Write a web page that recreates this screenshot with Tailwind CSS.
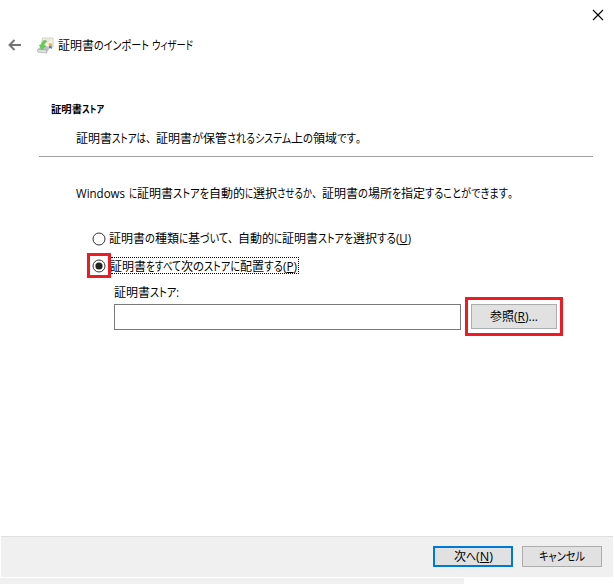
<!DOCTYPE html>
<html lang="ja">
<head>
<meta charset="utf-8">
<title>証明書のインポート ウィザード</title>
<script src="https://cdn.jsdelivr.net/npm/@tailwindcss/browser@4"></script>
</head>
<body class="bg-white">
<main class="flex h-[584px] w-[614px] flex-col overflow-hidden bg-white font-['Open_Sans','Noto_Sans_CJK_JP',sans-serif] text-[12px] leading-[18px] text-black">
  <div class="flex h-[30px] shrink-0 justify-end pt-[9px] pr-[10px]">
    <svg class="h-3 w-3" viewBox="0 0 12 12" fill="none" stroke="#000" stroke-width="1.1"><path d="M1 1l10 10M11 1L1 11"/></svg>
  </div>
  <header class="flex h-[30px] shrink-0 items-center pl-[8px]">
    <svg class="h-[12px] w-[14px]" viewBox="0 0 14 12" fill="none" stroke="#737373" stroke-width="1.9"><path d="M13 6H1.5M6.5 1L1.5 6l5 5"/></svg>
    <svg class="ml-[15px] h-[17px] w-[17px]" viewBox="0 0 17 17">
      <path d="M5.5 1h10.5v9H4.5z" fill="#f7f3e8" stroke="#c9c3b5" stroke-width=".8"/>
      <path d="M9 3h5M9 5h3" stroke="#ddd8ca"/>
      <path d="M12.4 8l-.8 4 1.7-1 1.7 1-.6-4z" fill="#5277be"/>
      <circle cx="13.3" cy="7.6" r="1.7" fill="#efb532"/>
      <path d="M.7 12l3-2.5h7.8l1 2-2.5 3.5-9-.5z" fill="#bec4c5"/>
      <path d="M.7 12.3l9 .7v3l-9-1z" fill="#e1e4e4" stroke="#969c9d" stroke-width=".6"/>
      <path d="M8.5 3c-2.5.4-3.6 2.2-4 4.7L2.4 8l2.2 4.6L9 9l-2-.5c.3-2 1.1-3 2.6-3.8z" fill="#5fd04f" stroke="#4db84e" stroke-width=".5"/>
    </svg>
    <div class="ml-1 flex translate-y-px"><span data-w="36">証明書</span><span data-w="55">のインポート</span><span data-w="3"></span><span data-w="41">ウィザード</span></div>
  </header>

  <section class="flex h-[97px] shrink-0 flex-col pl-[51px] pt-[40px]">
    <div class="flex text-[10px] font-bold"><span data-w="31">証明書</span><span data-w="22">ストア</span></div>
    <div class="mt-[12px] ml-[25px] flex"><span data-w="36">証明書</span><span data-w="34">ストアは</span><span data-w="10">、</span><span data-w="36">証明書</span><span data-w="11">が</span><span data-w="24">保管</span><span data-w="28">される</span><span data-w="36">システム</span><span data-w="12">上</span><span data-w="10">の</span><span data-w="24">領域</span><span data-w="19">です</span><span data-w="10">。</span></div>
  </section>
  <div class="mr-[21px] ml-[39px] h-px shrink-0 translate-y-[-1px] bg-[#a0a0a0]"></div>

  <section class="flex grow flex-col">
    <div class="mt-[27px] ml-[76px] flex"><span data-w="49">Windows</span><span data-w="4"></span><span data-w="8">に</span><span data-w="36">証明書</span><span data-w="36">ストアを</span><span data-w="36">自動的</span><span data-w="8">に</span><span data-w="24">選択</span><span data-w="35">させるか</span><span data-w="10">、</span><span data-w="36">証明書</span><span data-w="10">の</span><span data-w="24">場所</span><span data-w="9">を</span><span data-w="24">指定</span><span data-w="83">することができます</span><span data-w="10">。</span></div>
    <div class="mt-[27px] ml-[92px] flex items-center">
      <svg class="h-[14px] w-[14px]" viewBox="0 0 14 14"><circle cx="7" cy="7" r="6" fill="#fff" stroke="#333"/></svg>
      <div class="ml-[3px] flex"><span data-w="36">証明書</span><span data-w="10">の</span><span data-w="24">種類</span><span data-w="9">に</span><span data-w="12">基</span><span data-w="28">づいて</span><span data-w="10">、</span><span data-w="36">自動的</span><span data-w="8">に</span><span data-w="36">証明書</span><span data-w="35">ストアを</span><span data-w="24">選択</span><span data-w="19">する</span><span data-w="15">(<u>U</u>)</span></div>
    </div>
    <div class="mt-[5px] ml-[87px] flex items-center">
      <div class="flex h-[25px] w-[24px] items-center justify-center border-3 border-[#ed1c24]">
        <svg class="h-[14px] w-[14px]" viewBox="0 0 14 14"><circle cx="7" cy="7" r="6" fill="#fff" stroke="#333"/><circle cx="7" cy="7" r="3.6" fill="#222"/></svg>
      </div>
      <div class="flex h-[17px] w-[188px] items-center border border-l-0 border-dotted border-black"><div class="-ml-[1px] flex translate-y-px"><span data-w="36">証明書</span><span data-w="35">をすべて</span><span data-w="12">次</span><span data-w="11">の</span><span data-w="36">ストアに</span><span data-w="24">配置</span><span data-w="19">する</span><span data-w="14">(<u>P</u>)</span></div></div>
    </div>
    <div class="mt-[6px] ml-[114px] flex"><span data-w="36">証明書</span><span data-w="29">ストア:</span></div>
    <div class="-mt-[5px] ml-[114px] flex items-center">
      <div class="h-[26px] w-[347px] border border-[#7a7a7a] bg-white"></div>
      <div class="ml-[4px] flex h-[39px] w-[98px] items-center border-3 border-[#ed1c24] pl-[3px]">
        <button class="flex h-[25px] w-[86px] items-center justify-center border border-[#adadad] bg-[#e1e1e1]"><span data-w="24">参照</span><span data-w="24">(<u>R</u>)...</span></button>
      </div>
    </div>
  </section>

  <footer class="mx-px flex h-[41px] shrink-0 justify-end border-t border-[#dfdfdf] bg-[#f0f0f0] pt-[9px] pr-[11px]">
    <button class="flex h-[21px] w-[80px] items-center justify-center border-2 border-[#0078d7] bg-[#e1e1e1]"><span data-w="12">次</span><span data-w="10">へ</span><span data-w="17">(<u>N</u>)</span></button>
    <button class="ml-[9px] flex h-[21px] w-[80px] items-center justify-center border border-[#adadad] bg-[#e1e1e1]"><span data-w="46">キャンセル</span></button>
  </footer>
  <div class="mt-px h-[6px] w-[464px] shrink-0 bg-[#f0f0f0]"></div>
</main>
<script>
// Fit each text run to its UI-font advance width, again whenever its natural width changes.
const fit = new ResizeObserver(entries => {
  for (const e of entries) {
    const w = e.contentRect.width;
    if (w) e.target.style.transform = 'scaleX(' + e.target.parentNode.dataset.w / w + ')';
  }
});
document.querySelectorAll('[data-w]').forEach(el => {
  const palt = !/^[、。]$/.test(el.textContent);
  const inner = document.createElement('span');
  inner.append(...el.childNodes);
  inner.style.cssText = 'display:inline-block;white-space:nowrap;transform-origin:0 50%;' + (palt ? 'font-feature-settings:"palt"' : 'text-spacing-trim:space-all');
  el.append(inner);
  el.style.cssText = 'display:block;flex:none;text-align:left;width:' + el.dataset.w + 'px;white-space:nowrap;height:18px';
  fit.observe(inner);
});
</script>
</body>
</html>
